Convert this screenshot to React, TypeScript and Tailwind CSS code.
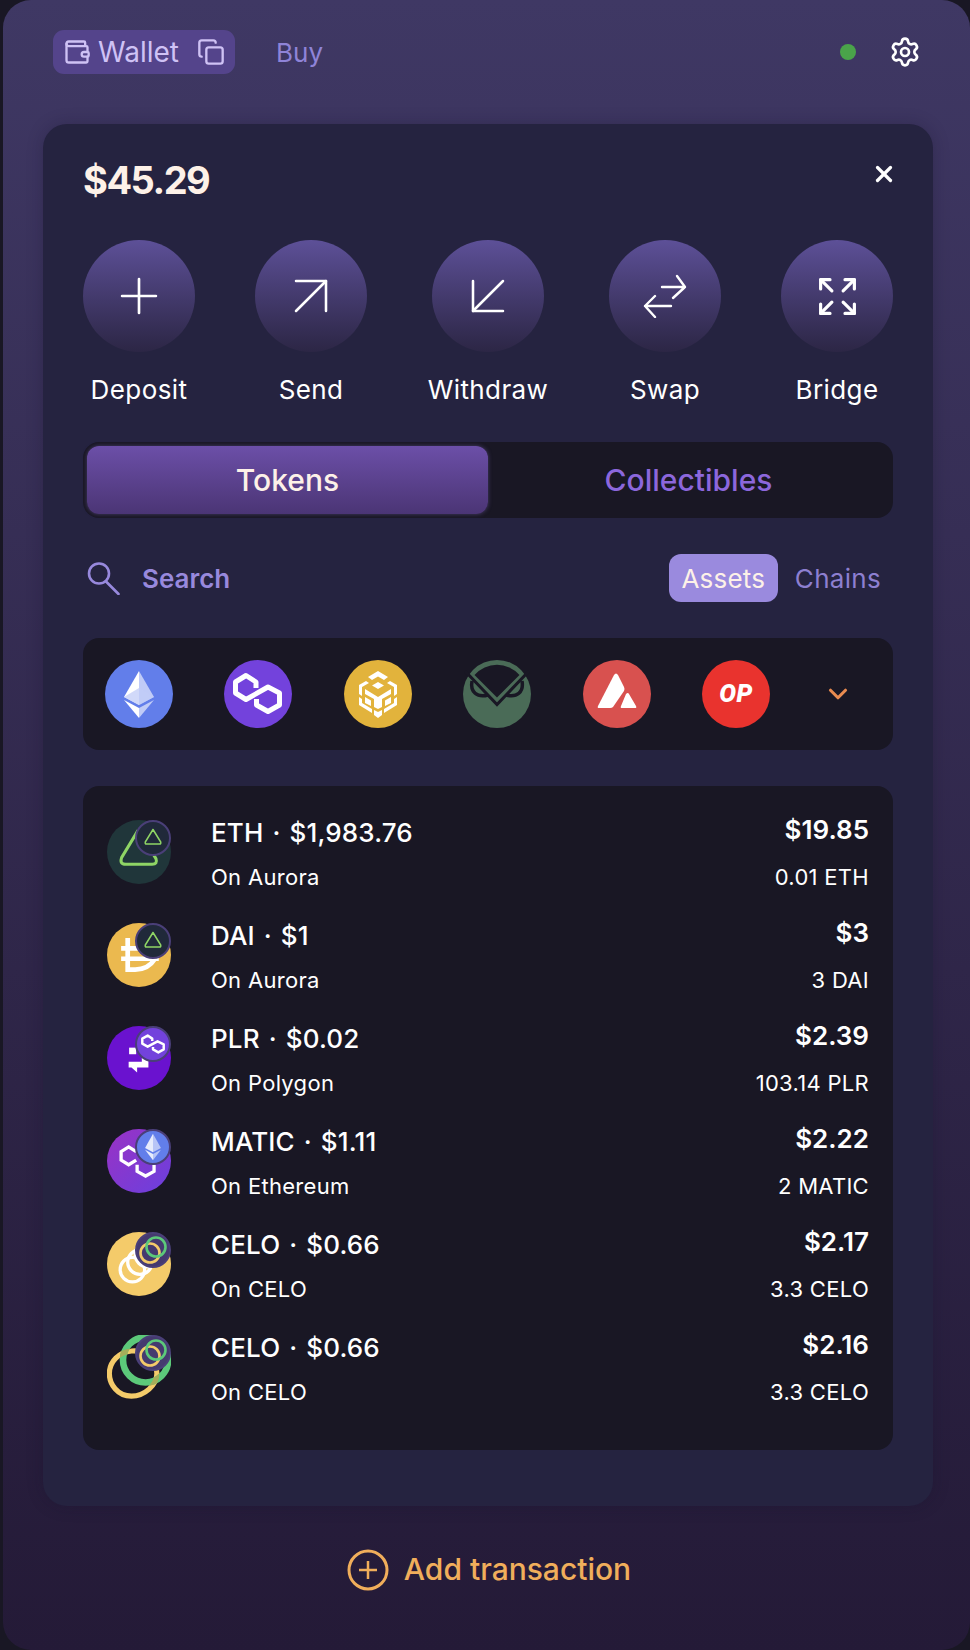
import { ArrowDownLeft, ArrowUpRight, ChevronDown, Copy, Expand, Plus, Settings, Wallet, X } from "lucide-react";
import type { ReactNode } from "react";

function Logo({ size, children, className = "" }: { size: number; children: ReactNode; className?: string }) {
  return (
    <svg width={size} height={size} viewBox="0 0 68 68" className={className}>
      {children}
    </svg>
  );
}

const Eth = ({ size = 68 }: { size?: number }) => (
  <Logo size={size}>
    <circle cx="34" cy="34" r="34" fill="#627eea" />
    <polygon points="34,11 19,37 34,45" fill="#fff" />
    <polygon points="34,11 49,37 34,45" fill="#fff" fillOpacity="0.6" />
    <polygon points="34,28 19,37 34,45 49,37" fill="#c1ccf7" fillOpacity="0.75" />
    <polygon points="19,40 34,48 34,58" fill="#fff" />
    <polygon points="49,40 34,48 34,58" fill="#fff" fillOpacity="0.6" />
  </Logo>
);

const Matic = ({ size = 68 }: { size?: number }) => (
  <Logo size={size}>
    <circle cx="34" cy="34" r="34" fill="#7342dc" />
    <path d="M32 28 V22 L22 15.5 L11.5 22 V33 L22 39.5 L44 27 L55.5 33 V45 L44 51.5 L32.5 45 V39" fill="none" stroke="#fff" strokeWidth="5" strokeLinejoin="round" />
  </Logo>
);

const Bnb = () => (
  <Logo size={68}>
    <circle cx="34" cy="34" r="34" fill="#e2b33c" />
    <g fill="#fff">
      <polygon points="34,11 44,17 40,20 34,16.5 28,20 24,17" />
      <polygon points="34,22 40,25.500 34,29 28,25.500" />
      <polygon points="22,21 25,23 18,27 18,36 15,34 15,25" />
      <polygon points="46,21 43,23 50,27 50,36 53,34 53,25" />
      <polygon points="21,29 34,37 47,29 47,34 38,39 38,47 34,49 30,47 30,39 21,34" />
      <polygon points="15,37 18,39 18,43 28,49 28,53 15,45" />
      <polygon points="53,37 50,39 50,43 40,49 40,53 53,45" />
      <polygon points="21,37 27,40.500 27,46 21,43" />
      <polygon points="47,37 41,40.500 41,46 47,43" />
      <polygon points="30,50 34,52 38,50 38,55 34,58 30,55" />
    </g>
  </Logo>
);

const Owl = () => (
  <Logo size={68}>
    <circle cx="34" cy="34" r="34" fill="#4a6b57" />
    <path d="M11.500 15 A30 30 0 0 1 56.500 15 L34 37.500 Z" fill="#191724" />
    <path d="M2 11 L34 44.500 L66 11" fill="none" stroke="#191724" strokeWidth="3" />
    <path d="M9 21 C7 32 14 38 25 35" fill="none" stroke="#191724" strokeWidth="3.500" />
    <path d="M59 21 C61 32 54 38 43 35" fill="none" stroke="#191724" strokeWidth="3.500" />
  </Logo>
);

const Avax = () => (
  <Logo size={68}>
    <circle cx="34" cy="34" r="34" fill="#d8514f" />
    <path d="M31 15 Q33 12 35 15 L41 27 Q42 29 41 31 L30 47 Q29 48 27 48 L16 48 Q14 48 15 46 Z" fill="#fff" />
    <path d="M43 34 Q45 32 46 34 L53 46 Q54 48 52 48 L39 48 Q37 48 38 46 Z" fill="#fff" />
  </Logo>
);

const Op = () => (
  <div className="w-[68px] h-[68px] rounded-full bg-[#e9332e] flex items-center justify-center">
    <span className="text-white text-[25px] font-black italic tracking-[0.5px] font-['Roboto',sans-serif]">OP</span>
  </div>
);

const AuroraToken = () => (
  <Logo size={64}>
    <circle cx="34" cy="34" r="34" fill="#20363a" />
    <path d="M33 11 L15.500 40 Q13 47 20 47 H48 Q54 47 52 41 L47 33" fill="none" stroke="#8fd565" strokeWidth="3.200" strokeLinejoin="round" />
  </Logo>
);

const Dai = () => (
  <Logo size={64}>
    <circle cx="34" cy="34" r="34" fill="#ebb94f" />
    <path d="M22 16 V49.500 H30 C40 49.500 46 46 51 38" fill="none" stroke="#fff" strokeWidth="5" />
    <path d="M15 27 H40 M15 38 H55" fill="none" stroke="#fff" strokeWidth="5" />
  </Logo>
);

const Plr = () => (
  <Logo size={64}>
    <circle cx="34" cy="34" r="34" fill="#6a12cf" />
    <g fill="#fff">
      <rect x="23.500" y="23" width="7.500" height="7" />
      <path d="M23 38 H37 V34 H44 V44 H32 V49.500 L26 44 H23 Z" />
    </g>
  </Logo>
);

const MaticToken = () => (
  <svg width={64} height={64} viewBox="0 0 68 68">
    <defs>
      <linearGradient id="matic-bg" x1="0" y1="0" x2="1" y2="1">
        <stop offset="0" stopColor="#9a32c4" />
        <stop offset="1" stopColor="#6a40de" />
      </linearGradient>
    </defs>
    <circle cx="34" cy="34" r="34" fill="url(#matic-bg)" />
    <path d="M31 24 L23 19 L15 24 V33 L23 38 L31 33 M32 38 V45 L41 50 L50 45 V38" fill="none" stroke="#fff" strokeWidth="3.500" />
  </svg>
);

const CeloToken = () => (
  <Logo size={64}>
    <circle cx="34" cy="34" r="34" fill="#f4cb6a" />
    <circle cx="43" cy="24" r="13" fill="none" stroke="#fff" strokeWidth="3.500" />
    <circle cx="35" cy="32" r="13" fill="none" stroke="#fff" strokeWidth="3.500" />
    <circle cx="27" cy="40" r="13" fill="none" stroke="#fff" strokeWidth="3.500" />
  </Logo>
);

const CeloRings = () => (
  <svg width={64} height={64} viewBox="0 0 68 68">
    <defs>
      <mask id="celo-overlap">
        <circle cx="41" cy="26.500" r="24" fill="none" stroke="#fff" strokeWidth="7" />
      </mask>
    </defs>
    <path d="M26 17 C42 15 53 30 53 41 C53 53 40 65 26 65 C11 65 2.500 52 2.500 41 C2.500 28 13 18 26 17 Z" fill="none" stroke="#f4cb6a" strokeWidth="5.500" />
    <circle cx="41" cy="26.500" r="24" fill="none" stroke="#5cc97a" strokeWidth="7" />
    <path d="M26 17 C42 15 53 30 53 41 C53 53 40 65 26 65 C11 65 2.500 52 2.500 41 C2.500 28 13 18 26 17 Z" fill="none" stroke="#a5ad5a" strokeWidth="5.500" mask="url(#celo-overlap)" />
  </svg>
);

function Badge({ bg, children }: { bg: string; children: ReactNode }) {
  return (
    <div className={`absolute top-0 right-0 w-[36px] h-[36px] rounded-full border-2 border-[#4a3f78] flex items-center justify-center ${bg}`}>
      {children}
    </div>
  );
}

const AuroraBadge = () => (
  <Badge bg="bg-[#20293a]">
    <svg width="20" height="20" viewBox="0 0 20 20" className="mb-[2px]">
      <path d="M10 2.500 L2.300 15 Q1.800 17 3.500 17 H16.500 Q18.200 17 17.700 15 Z" fill="none" stroke="#8fd565" strokeWidth="1.500" strokeLinejoin="round" />
    </svg>
  </Badge>
);

const PolygonBadge = () => (
  <Badge bg="bg-[#7342dc]">
    <svg width="26" height="26" viewBox="0 0 68 68">
      <path d="M32 26 V20 L20 12 L6 20 V33 L20 41 L46 27 L62 35 V48 L48 56 L34 48 V42" fill="none" stroke="#fff" strokeWidth="6.500" strokeLinejoin="round" />
    </svg>
  </Badge>
);

const EthBadge = () => (
  <Badge bg="bg-[#627eea]">
    <svg width="30" height="30" viewBox="0 0 68 68">
      <polygon points="34,4 16,36 34,46" fill="#fff" fillOpacity="0.85" />
      <polygon points="34,4 52,36 34,46" fill="#fff" fillOpacity="0.55" />
      <polygon points="16,40 34,50 34,64" fill="#fff" fillOpacity="0.85" />
      <polygon points="52,40 34,50 34,64" fill="#fff" fillOpacity="0.55" />
    </svg>
  </Badge>
);

const CeloBadge = () => (
  <Badge bg="bg-[#453a6f]">
    <svg width="32" height="32" viewBox="0 0 32 32">
      <circle cx="13" cy="19" r="9.500" fill="none" stroke="#f4cb6a" strokeWidth="2.600" />
      <circle cx="19" cy="13" r="9.500" fill="none" stroke="#5cc97a" strokeWidth="2.600" />
    </svg>
  </Badge>
);

const tokens = [
  { name: "ETH", price: "$1,983.76", chain: "On Aurora", usd: "$19.85", amount: "0.01 ETH", icon: <AuroraToken />, badge: <AuroraBadge /> },
  { name: "DAI", price: "$1", chain: "On Aurora", usd: "$3", amount: "3 DAI", icon: <Dai />, badge: <AuroraBadge /> },
  { name: "PLR", price: "$0.02", chain: "On Polygon", usd: "$2.39", amount: "103.14 PLR", icon: <Plr />, badge: <PolygonBadge /> },
  { name: "MATIC", price: "$1.11", chain: "On Ethereum", usd: "$2.22", amount: "2 MATIC", icon: <MaticToken />, badge: <EthBadge /> },
  { name: "CELO", price: "$0.66", chain: "On CELO", usd: "$2.17", amount: "3.3 CELO", icon: <CeloToken />, badge: <CeloBadge /> },
  { name: "CELO", price: "$0.66", chain: "On CELO", usd: "$2.16", amount: "3.3 CELO", icon: <CeloRings />, badge: <CeloBadge /> },
];

const SwapIcon = () => (
  <svg width="44" height="44" viewBox="0 0 44 44" fill="none" stroke="#fff" strokeWidth="2.400" strokeLinecap="round" strokeLinejoin="round">
    <path d="M19 13 H42 M34 2 L42 13 L30 24" />
    <path d="M28 32 H2 M12 22 L2 32 L12 43" />
  </svg>
);

const SearchIcon = () => (
  <svg width="33" height="33" viewBox="0 0 33 33" fill="none" stroke="#9889dd" strokeWidth="2.600" strokeLinecap="round">
    <circle cx="12" cy="11.500" r="10" />
    <path d="M19 19.500 L31.500 32" />
  </svg>
);

const actions = [
  { label: "Deposit", width: "w-[112px]", icon: <Plus size={58} color="#fff" strokeWidth={1.100} /> },
  { label: "Send", width: "w-[112px]", icon: <ArrowUpRight size={72} color="#fff" strokeWidth={0.850} /> },
  { label: "Withdraw", width: "w-[122px]", icon: <ArrowDownLeft size={72} color="#fff" strokeWidth={0.850} /> },
  { label: "Swap", width: "w-[112px]", icon: <SwapIcon /> },
  { label: "Bridge", width: "w-[112px]", icon: <Expand size={45} color="#fff" strokeWidth={1.700} /> },
];

export default function App() {
  return (
    <div className="h-[1650px] bg-[#191724] pl-[3px] font-['Inter',sans-serif] overflow-hidden">
      <div className="h-full rounded-[28px] bg-linear-to-b from-[#3f3864] to-[#241a37] pt-[30px] flex flex-col">
        <div className="h-[44px] flex items-center pl-[50px] pr-[49px]">
          <div className="w-[182px] h-[44px] rounded-[11px] bg-[#54448b] flex items-center pl-[10px] text-[#cfc2f5] text-[28px]">
            <Wallet size={28} strokeWidth={2} />
            <span className="ml-[7px]">Wallet</span>
            <Copy size={28} strokeWidth={2} className="ml-[18px]" />
          </div>
          <span className="ml-[41px] text-[26px] text-[#8f84d8]">Buy</span>
          <div className="ml-auto w-[16px] h-[16px] rounded-full bg-[#4aa34a]" />
          <Settings size={32} color="#fff" strokeWidth={2} className="ml-[33px]" />
        </div>

        <div className="mt-[50px] ml-[40px] w-[890px] h-[1382px] rounded-[24px] bg-[#252340] px-[40px] pt-[36px] shadow-[0_0_16px_rgba(20,16,40,0.25)]">
          <div className="flex items-center justify-between h-[40px]">
            <span className="text-[38px] font-bold tracking-[-1.500px] text-[#fdf1e8]">$45.29</span>
            <X size={26} color="#fff" strokeWidth={3} className="mr-[-4px] mb-[12px]" />
          </div>

          <div className="mt-[40px] flex justify-between">
            {actions.map((a) => (
              <div key={a.label} className={`flex flex-col items-center ${a.width}`}>
                <div className="w-[112px] h-[112px] rounded-full bg-linear-to-b from-[#5d5098] to-[#2c2645] flex items-center justify-center">
                  {a.icon}
                </div>
                <span className="mt-[22px] text-[26px] leading-[32px] tracking-[0.4px] whitespace-nowrap text-white">{a.label}</span>
              </div>
            ))}
          </div>

          <div className="mt-[36px] h-[76px] rounded-[16px] bg-[#191724] p-[4px] flex">
            <div className="w-[401px] rounded-[12px] bg-linear-to-b from-[#6c4fa8] to-[#4b3575] flex items-center justify-center text-[30px] font-medium text-[#fdf1e8] shadow-[0_0_4px_rgba(120,100,180,0.5)]">
              Tokens
            </div>
            <div className="flex-1 flex items-center justify-center text-[30px] font-medium text-[#8c67dc]">
              Collectibles
            </div>
          </div>

          <div className="mt-[36px] h-[48px] flex items-center">
            <div className="ml-[4px]">
              <SearchIcon />
            </div>
            <span className="ml-[22px] text-[26px] font-semibold text-[#9889dd]">Search</span>
            <div className="ml-auto w-[109px] h-[48px] rounded-[12px] bg-[#9a8ade] flex items-center justify-center text-[26px] tracking-[0.2px] text-[#fdf1e8]">
              Assets
            </div>
            <span className="ml-[17px] mr-[12px] text-[26px] tracking-[0.3px] text-[#8d7fd0]">Chains</span>
          </div>

          <div className="mt-[36px] h-[112px] rounded-[16px] bg-[#191724] pl-[22px] flex items-center gap-[51.400px]">
            <Eth />
            <Matic />
            <Bnb />
            <Owl />
            <Avax />
            <Op />
            <ChevronDown size={30} color="#e98b50" strokeWidth={2.500} className="ml-[2px]" />
          </div>

          <div className="mt-[36px] h-[664px] rounded-[16px] bg-[#191724] pl-[24px] pr-[24px] pt-[29px]">
            {tokens.map((t, i) => (
              <div key={i} className="h-[103px] flex items-start">
                <div className="relative mt-[5px] w-[64px] h-[64px]">
                  {t.icon}
                  {t.badge}
                </div>
                <div className="ml-[40px] mt-[4px]">
                  <div className="text-[26px] leading-[28px] font-medium tracking-[0.15px] text-white">
                    {t.name}<span className="mx-[9px]">·</span>{t.price}
                  </div>
                  <div className="mt-[16px] text-[22px] leading-[28px] tracking-[0.3px] text-white">{t.chain}</div>
                </div>
                <div className="ml-auto text-right">
                  <div className="mt-[1px] text-[26px] leading-[28px] font-semibold text-white">{t.usd}</div>
                  <div className="mt-[19px] text-[22px] leading-[28px] tracking-[0.3px] text-white">{t.amount}</div>
                </div>
              </div>
            ))}
          </div>
        </div>

        <div className="mt-[41px] flex items-center justify-center pl-[5px] text-[#f0ae5b]">
          <svg width="42" height="42" viewBox="0 0 42 42" fill="none" stroke="#f0ae5b" strokeWidth="3">
            <circle cx="21" cy="21" r="19" />
            <path d="M21 12 V30 M12 21 H30" strokeWidth="2.500" />
          </svg>
          <span className="ml-[15px] text-[30px] font-medium">Add transaction</span>
        </div>
      </div>
    </div>
  );
}
